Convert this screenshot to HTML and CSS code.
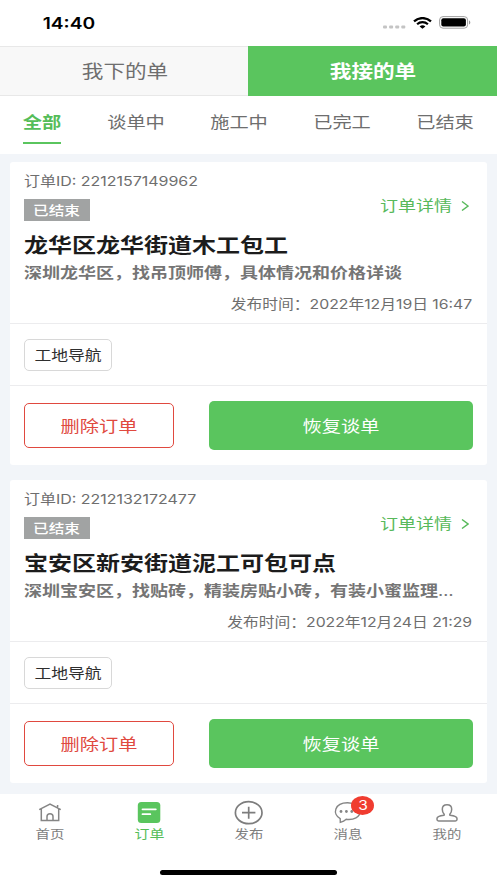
FILE: index.html
```html
<!DOCTYPE html>
<html lang="zh-CN">
<head>
<meta charset="utf-8">
<title>订单</title>
<link rel="stylesheet" href="styles.css">
</head>
<body>
<div class="app">
  <header class="status">
    <span class="wide clock">14:40</span>
    <div class="status-icons">
      <svg class="signal" width="23" height="4" viewBox="0 0 23 4" fill="#c4c4c4"><rect x="0" y="0.5" width="4" height="3" rx="1"/><rect x="6.1" y="0.5" width="4" height="3" rx="1"/><rect x="12.2" y="0.5" width="4" height="3" rx="1"/><rect x="18.3" y="0.5" width="4" height="3" rx="1"/></svg>
      <svg class="wifi" width="19" height="12" viewBox="0 0 19 12" fill="none" stroke="#000" stroke-width="2.2"><path d="M1 4.4C5.7-.1 13.3-.1 18 4.4"/><path d="M4.1 7.3C7.2 4.4 11.8 4.4 14.9 7.3"/><path d="M6.6 9.4C8.3 7.9 10.7 7.9 12.4 9.4L9.5 11.8Z" fill="#000" stroke="none"/></svg>
      <svg width="32" height="13" viewBox="0 0 32 13"><rect x=".6" y=".6" width="28" height="11.6" rx="3.4" fill="none" stroke="#a0a0a0"/><rect x="2.3" y="2.3" width="24.6" height="8.2" rx="2"/><path d="M30 4.3C31.8 5 31.8 8 30 8.6Z" fill="#999"/></svg>
    </div>
  </header>

  <div class="switch">
    <div class="switch-item"><span class="wide">我下的单</span></div>
    <div class="switch-item on"><span class="wide">我接的单</span></div>
  </div>

  <div class="filters">
    <div class="filter on"><span class="wide">全部</span></div>
    <div class="filter"><span class="wide">谈单中</span></div>
    <div class="filter"><span class="wide">施工中</span></div>
    <div class="filter"><span class="wide">已完工</span></div>
    <div class="filter"><span class="wide">已结束</span></div>
  </div>

  <main class="list">
    <article class="card">
      <section class="info">
        <div class="order-id"><span class="wide left">订单ID: 2212157149962</span></div>
        <div class="state-row">
          <div class="badge"><span class="wide">已结束</span></div>
          <div class="detail"><span class="wide right">订单详情</span><svg width="8" height="10" viewBox="0 0 8 10" fill="none" stroke="#58b95b" stroke-width="1.4"><path d="M1 .5 7 5 1 9.5"/></svg></div>
        </div>
        <div class="title"><span class="wide left">龙华区龙华街道木工包工</span></div>
        <div class="desc"><span class="wide left">深圳龙华区，找吊顶师傅，具体情况和价格详谈</span></div>
        <div class="date"><span class="wide right">发布时间：2022年12月19日 16:47</span></div>
      </section>
      <section class="tools"><div class="tool"><span class="wide">工地导航</span></div></section>
      <section class="actions">
        <div class="btn delete"><span class="wide">删除订单</span></div>
        <div class="btn resume"><span class="wide">恢复谈单</span></div>
      </section>
    </article>

    <article class="card">
      <section class="info">
        <div class="order-id"><span class="wide left">订单ID: 2212132172477</span></div>
        <div class="state-row">
          <div class="badge"><span class="wide">已结束</span></div>
          <div class="detail"><span class="wide right">订单详情</span><svg width="8" height="10" viewBox="0 0 8 10" fill="none" stroke="#58b95b" stroke-width="1.4"><path d="M1 .5 7 5 1 9.5"/></svg></div>
        </div>
        <div class="title"><span class="wide left">宝安区新安街道泥工可包可点</span></div>
        <div class="desc"><span class="wide left">深圳宝安区，找贴砖，精装房贴小砖，有装小蜜监理<span class="dots">…</span></span></div>
        <div class="date"><span class="wide right">发布时间：2022年12月24日 21:29</span></div>
      </section>
      <section class="tools"><div class="tool"><span class="wide">工地导航</span></div></section>
      <section class="actions">
        <div class="btn delete"><span class="wide">删除订单</span></div>
        <div class="btn resume"><span class="wide">恢复谈单</span></div>
      </section>
    </article>
  </main>

  <nav class="tabbar">
    <div class="tab">
      <svg width="30" height="26" viewBox="0 0 30 26" fill="none" stroke="#858585" stroke-width="1.5"><path d="M4.2 9.7 15 4.2 25.8 9.7M6.3 9V20.6H23.7V9M22.6 8V5M12 20.5V16.5C12 12.8 18 12.8 18 16.5V20.5"/></svg>
      <span class="wide">首页</span>
    </div>
    <div class="tab on">
      <svg width="30" height="26" viewBox="0 0 30 26"><rect x="3.8" y="2" width="22.5" height="21" rx="3.5" fill="#5ac55e"/><path d="M8.5 9.3H21.8M8.5 14.2H16.3" stroke="#fff" stroke-width="1.8" stroke-linecap="round"/></svg>
      <span class="wide">订单</span>
    </div>
    <div class="tab">
      <svg width="30" height="26" viewBox="0 0 30 26" fill="none" stroke="#7d7d7d" stroke-width="1.7"><ellipse cx="14.7" cy="12.7" rx="13.3" ry="11"/><path d="M8 12.7H21.4M14.7 6.7V18.7"/></svg>
      <span class="wide">发布</span>
    </div>
    <div class="tab">
      <svg width="30" height="26" viewBox="0 0 30 26" fill="none" stroke="#858585" stroke-width="1.4"><path d="M7.3 22.4 7.2 18.6C-1 14.2 1.5 2.8 14.5 2.8C22 2.8 27.3 6.5 27.3 11.3C27.3 17 20.5 20.3 13.2 19.3C11.5 20.9 9.8 21.7 7.3 22.4Z"/><g fill="#858585" stroke="none"><circle cx="8" cy="11.5" r="1.4"/><circle cx="13.4" cy="11.5" r="1.4"/><circle cx="18.8" cy="11.5" r="1.4"/></g></svg>
      <span class="count"><span class="wide">3</span></span>
      <span class="wide">消息</span>
    </div>
    <div class="tab">
      <svg width="30" height="26" viewBox="0 0 30 26" fill="none" stroke="#858585" stroke-width="1.5"><path d="M12.2 14.4C10.8 13 10.3 11 10.3 9.3C10.3 6.6 12.2 4.8 15 4.8C17.8 4.8 19.7 6.6 19.7 9.3C19.7 11 19.2 13 17.8 14.4L18 15.2C21.5 15.6 25 16.3 25 18.4V19.6Q25 21 23.4 21H6.6Q5 21 5 19.6V18.4C5 16.3 8.5 15.6 12 15.2Z"/></svg>
      <span class="wide">我的</span>
    </div>
  </nav>
  <div class="home"></div>
</div>
</body>
</html>
```

FILE: styles.css
```css
* { box-sizing: border-box; }
body {
  margin: 0;
  font-family: Inter, "Noto Sans CJK SC", sans-serif;
  background: #fff;
  color: #6e6e6e;
}
svg { display: block; flex: none; }
.app {
  width: 497px;
  height: 883px;
  display: flex;
  flex-direction: column;
  overflow: hidden;
}

.wide {
  display: inline-block;
  white-space: nowrap;
  transform: scaleX(1.2);
}
.wide.left { transform-origin: left; }
.wide.right { transform-origin: right; }

.status {
  height: 46px;
  flex: none;
  display: flex;
  align-items: center;
  justify-content: space-between;
  padding: 0 26px 1px 47px;
}
.clock { font-size: 16px; font-weight: 600; color: #000; line-height: 20px; }
.status-icons { display: flex; align-items: center; }
.signal { margin: 8px 7px 0 0; }
.wifi { margin-right: 7px; }

.switch { height: 50px; flex: none; display: flex; }
.switch-item {
  width: 248px;
  display: flex;
  align-items: center;
  justify-content: center;
  padding: 2px 0 0 1px;
  font-size: 18px;
  line-height: 24px;
  background: #f8f8f8;
  border: solid #e8e8e8;
  border-width: 1px 0;
}
.switch-item.on {
  width: 249px;
  padding-left: 0;
  background: #5ac55e;
  border-color: #5ac55e;
  color: #fff;
  font-weight: 600;
}

.filters {
  height: 58px;
  flex: none;
  display: flex;
  justify-content: space-between;
  padding: 0 23px;
}
.filter {
  width: 57px;
  height: 48px;
  display: flex;
  justify-content: center;
  align-items: center;
  font-size: 16px;
  padding-top: 3px;
  border-bottom: 2px solid transparent;
}
.filter.on {
  width: 38px;
  color: #55bd59;
  font-weight: 600;
  border-bottom-color: #5ac55e;
}

.list {
  height: 640px;
  flex: none;
  background: #f2f5f9;
  padding: 8px 10px 0;
  display: flex;
  flex-direction: column;
  gap: 15px;
}
.card {
  height: 303px;
  flex: none;
  background: #fff;
  border-radius: 3px;
}
.info {
  height: 162px;
  padding: 9px 15px 0 14px;
  border-bottom: 1px solid #ececee;
}
.order-id { height: 28px; font-size: 13.3px; line-height: 20px; }
.state-row { height: 22px; display: flex; justify-content: space-between; }
.badge {
  width: 66px;
  height: 22px;
  background: #a1a3a3;
  color: #fff;
  font-size: 13px;
  font-weight: 500;
  line-height: 22px;
  text-align: center;
}
.detail {
  display: flex;
  align-items: center;
  gap: 9px;
  height: 13px;
  margin-right: 3px;
  color: #58b95b;
  font-size: 15px;
}
.detail .wide { line-height: 20px; margin-top: 1px; }
.title {
  padding-top: 11px;
  font-size: 20px;
  line-height: 28px;
  font-weight: 600;
  color: #1c1c1c;
}
.desc {
  padding-top: 3px;
  font-size: 15px;
  line-height: 20px;
  font-weight: 600;
  color: #757575;
}
.dots { font-weight: 400; }
.date { margin-top: 11px; font-size: 13.15px; line-height: 20px; text-align: right; }
.tools { height: 62px; padding: 15px 14px 0; border-bottom: 1px solid #ececee; }
.tool {
  width: 88px;
  height: 32px;
  border: 1px solid #d8d8d8;
  border-radius: 5px;
  font-size: 14px;
  line-height: 29px;
  text-align: center;
  color: #2e2e2e;
}
.actions {
  height: 79px;
  display: flex;
  justify-content: space-between;
  align-items: center;
  padding: 0 14px;
}
.btn {
  display: flex;
  align-items: center;
  justify-content: center;
  padding-bottom: 2px;
  font-size: 16px;
  border-radius: 5px;
}
.delete { width: 150px; height: 45px; border: 1px solid #e0493f; color: #e0493f; }
.resume { width: 264px; height: 49px; background: #5ac55e; color: #fff; }

.tabbar { height: 66px; flex: none; display: flex; }
.tab {
  flex: 1;
  display: flex;
  flex-direction: column;
  align-items: center;
  padding-top: 6px;
  font-size: 12px;
  line-height: 18px;
  color: #7d7d7d;
  position: relative;
}
.tab.on { color: #55bd59; font-size: 12.5px; }
.count {
  position: absolute;
  top: 2px;
  left: 53px;
  width: 23px;
  height: 19px;
  border-radius: 50%;
  background: #f03c30;
  color: #fff;
  font-size: 13px;
  line-height: 19px;
  text-align: center;
}
.home {
  width: 177px;
  height: 5px;
  flex: none;
  align-self: center;
  margin-top: 10px;
  border-radius: 3px;
  background: #000;
}
```
